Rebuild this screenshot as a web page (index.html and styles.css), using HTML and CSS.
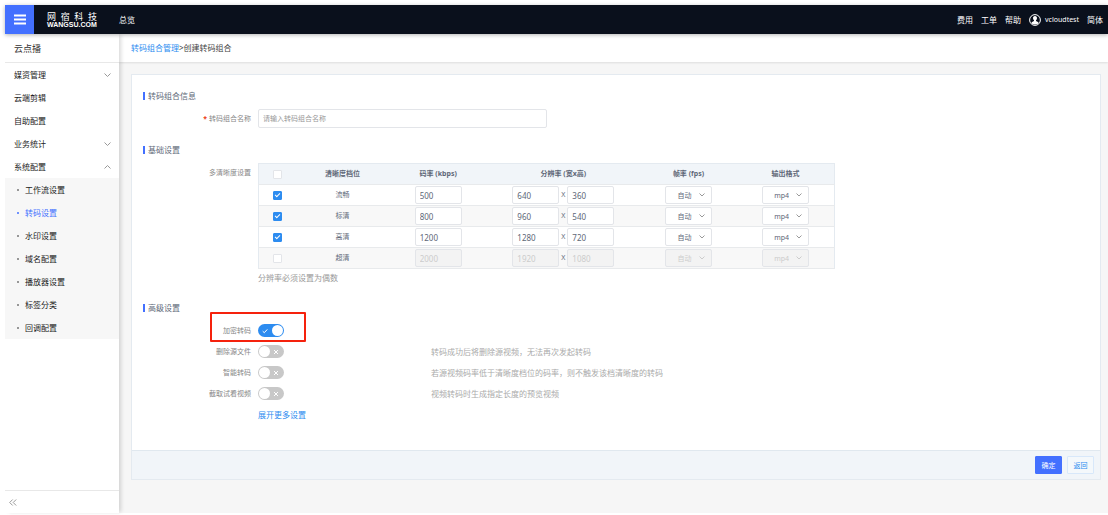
FILE: index.html
```html
<!DOCTYPE html>
<html lang="zh-CN">
<head>
    <meta charset="utf-8">
    <meta name="viewport" content="width=device-width, initial-scale=1.0">
    <title>创建转码组合</title>
    <link rel="stylesheet" href="styles.css">
</head>

<body>
    <header class="topbar">
        <button class="menu-btn" type="button" aria-label="菜单">
            <svg width="12" height="11" viewBox="0 0 12 11"><path d="M0 1.5h12M0 5.5h12M0 9.5h12" stroke="#fff" stroke-width="2"/></svg>
        </button>
        <a class="logo" href="#">
            <span class="logo-cn"><span>网</span><span>宿</span><span>科</span><span>技</span></span>
            <span class="logo-en">WANGSU.COM</span>
        </a>
        <a class="top-link" href="#">总览</a>
        <nav class="top-right">
            <a class="top-link" href="#">费用</a>
            <a class="top-link" href="#">工单</a>
            <a class="top-link" href="#">帮助</a>
            <a class="top-link user" href="#">
                <svg width="12" height="12" viewBox="0 0 12 12">
                    <circle cx="6" cy="6" r="5.4" fill="none" stroke="#fff"/>
                    <path d="M6 2C4.600 2 3.900 3 4 4.300c.1 1 .5 1.600 1 2v.8L2.600 8.200v1.200C4.500 10.900 7.500 10.900 9.400 9.400V8.200L7 7.100v-.8c.5-.4.9-1 1-2C8.100 3 7.400 2 6 2z" fill="#fff"/>
                </svg>
                <span>vcloudtest</span>
            </a>
            <a class="top-link" href="#">简体</a>
        </nav>
    </header>

    <div class="layout">
        <aside class="sidebar">
            <h2 class="sidebar-title">云点播</h2>
            <nav class="menu">
                <a class="menu-item" href="#">媒资管理<svg class="arrow" width="7" height="4" viewBox="0 0 7 4"><path d="M.5.500l3 3 3-3"/></svg></a>
                <a class="menu-item" href="#">云端剪辑</a>
                <a class="menu-item" href="#">自助配置</a>
                <a class="menu-item" href="#">业务统计<svg class="arrow" width="7" height="4" viewBox="0 0 7 4"><path d="M.5.500l3 3 3-3"/></svg></a>
                <a class="menu-item" href="#">系统配置<svg class="arrow" width="7" height="4" viewBox="0 0 7 4"><path d="M.5 3.500l3-3 3 3"/></svg></a>
                <div class="submenu">
                    <a class="submenu-item" href="#">工作流设置</a>
                    <a class="submenu-item active" href="#">转码设置</a>
                    <a class="submenu-item" href="#">水印设置</a>
                    <a class="submenu-item" href="#">域名配置</a>
                    <a class="submenu-item" href="#">播放器设置</a>
                    <a class="submenu-item" href="#">标签分类</a>
                    <a class="submenu-item" href="#">回调配置</a>
                </div>
            </nav>
            <button class="collapse-btn" type="button" aria-label="收起">
                <svg width="8" height="7" viewBox="0 0 8 7"><path d="M3.700.5l-3 3 3 3M7.200.5l-3 3 3 3" fill="none" stroke="#999"/></svg>
            </button>
        </aside>

        <main class="content">
            <div class="breadcrumb"><a href="#">转码组合管理</a>&gt;创建转码组合</div>

            <form class="card">
                <div class="card-body">
                    <h3 class="section-title">转码组合信息</h3>
                    <div class="form-row name-row">
                        <label class="form-label required" for="name">转码组合名称</label>
                        <input class="text-input name-input" id="name" type="text" placeholder="请输入转码组合名称">
                    </div>

                    <h3 class="section-title">基础设置</h3>
                    <div class="form-row table-row">
                        <span class="form-label">多清晰度设置</span>
                        <div class="table-wrap">
                            <table class="data-table">
                                <colgroup>
                                    <col class="col-check"><col class="col-level"><col class="col-rate"><col class="col-size"><col class="col-rate"><col class="col-rate">
                                </colgroup>
                                <thead>
                                    <tr>
                                        <th><input class="check" type="checkbox" aria-label="全选"></th>
                                        <th>清晰度档位</th>
                                        <th>码率 (kbps)</th>
                                        <th>分辨率 (宽x高)</th>
                                        <th>帧率 (fps)</th>
                                        <th>输出格式</th>
                                    </tr>
                                </thead>
                                <tbody>
                                    <tr>
                                        <td><input class="check" type="checkbox" aria-label="流畅" checked></td>
                                        <td>流畅</td>
                                        <td><input class="text-input num" type="text" aria-label="码率" value="500"></td>
                                        <td><div class="size"><input class="text-input num" type="text" aria-label="宽" value="640"><span>X</span><input class="text-input num" type="text" aria-label="高" value="360"></div></td>
                                        <td><div class="select"><select aria-label="帧率"><option>自动</option></select><svg width="6" height="4" viewBox="0 0 6 4"><path d="M.5.500l2.500 2.500 2.500-2.500"/></svg></div></td>
                                        <td><div class="select"><select aria-label="输出格式"><option>mp4</option></select><svg width="6" height="4" viewBox="0 0 6 4"><path d="M.5.500l2.500 2.500 2.500-2.500"/></svg></div></td>
                                    </tr>
                                    <tr>
                                        <td><input class="check" type="checkbox" aria-label="标清" checked></td>
                                        <td>标清</td>
                                        <td><input class="text-input num" type="text" aria-label="码率" value="800"></td>
                                        <td><div class="size"><input class="text-input num" type="text" aria-label="宽" value="960"><span>X</span><input class="text-input num" type="text" aria-label="高" value="540"></div></td>
                                        <td><div class="select"><select aria-label="帧率"><option>自动</option></select><svg width="6" height="4" viewBox="0 0 6 4"><path d="M.5.500l2.500 2.500 2.500-2.500"/></svg></div></td>
                                        <td><div class="select"><select aria-label="输出格式"><option>mp4</option></select><svg width="6" height="4" viewBox="0 0 6 4"><path d="M.5.500l2.500 2.500 2.500-2.500"/></svg></div></td>
                                    </tr>
                                    <tr>
                                        <td><input class="check" type="checkbox" aria-label="高清" checked></td>
                                        <td>高清</td>
                                        <td><input class="text-input num" type="text" aria-label="码率" value="1200"></td>
                                        <td><div class="size"><input class="text-input num" type="text" aria-label="宽" value="1280"><span>X</span><input class="text-input num" type="text" aria-label="高" value="720"></div></td>
                                        <td><div class="select"><select aria-label="帧率"><option>自动</option></select><svg width="6" height="4" viewBox="0 0 6 4"><path d="M.5.500l2.500 2.500 2.500-2.500"/></svg></div></td>
                                        <td><div class="select"><select aria-label="输出格式"><option>mp4</option></select><svg width="6" height="4" viewBox="0 0 6 4"><path d="M.5.500l2.500 2.500 2.500-2.500"/></svg></div></td>
                                    </tr>
                                    <tr>
                                        <td><input class="check" type="checkbox" aria-label="超清"></td>
                                        <td>超清</td>
                                        <td><input class="text-input num" type="text" aria-label="码率" value="2000" disabled></td>
                                        <td><div class="size"><input class="text-input num" type="text" aria-label="宽" value="1920" disabled><span>X</span><input class="text-input num" type="text" aria-label="高" value="1080" disabled></div></td>
                                        <td><div class="select"><select aria-label="帧率" disabled><option>自动</option></select><svg width="6" height="4" viewBox="0 0 6 4"><path d="M.5.500l2.500 2.500 2.500-2.500"/></svg></div></td>
                                        <td><div class="select"><select aria-label="输出格式" disabled><option>mp4</option></select><svg width="6" height="4" viewBox="0 0 6 4"><path d="M.5.500l2.500 2.500 2.500-2.500"/></svg></div></td>
                                    </tr>
                                </tbody>
                            </table>
                            <p class="tip">分辨率必须设置为偶数</p>
                        </div>
                    </div>

                    <h3 class="section-title">高级设置</h3>
                    <div class="switch-list">
                        <div class="form-row switch-row marked">
                            <label class="form-label" for="encrypt">加密转码</label>
                            <span class="switch on"><input id="encrypt" type="checkbox" checked><svg width="6" height="6" viewBox="0 0 6 6"><path d="M.7 3.200l1.600 1.500L5.300 1.400"/></svg></span>
                        </div>
                        <div class="form-row switch-row">
                            <label class="form-label" for="remove">删除源文件</label>
                            <span class="switch"><input id="remove" type="checkbox"><svg width="6" height="6" viewBox="0 0 6 6"><path d="M1 1l4 4M5 1l-4 4"/></svg></span>
                            <span class="hint">转码成功后将删除源视频，无法再次发起转码</span>
                        </div>
                        <div class="form-row switch-row">
                            <label class="form-label" for="smart">智能转码</label>
                            <span class="switch"><input id="smart" type="checkbox"><svg width="6" height="6" viewBox="0 0 6 6"><path d="M1 1l4 4M5 1l-4 4"/></svg></span>
                            <span class="hint">若源视频码率低于清晰度档位的码率，则不触发该档清晰度的转码</span>
                        </div>
                        <div class="form-row switch-row">
                            <label class="form-label" for="preview">截取试看视频</label>
                            <span class="switch"><input id="preview" type="checkbox"><svg width="6" height="6" viewBox="0 0 6 6"><path d="M1 1l4 4M5 1l-4 4"/></svg></span>
                            <span class="hint">视频转码时生成指定长度的预览视频</span>
                        </div>
                        <div class="form-row switch-row">
                            <span class="form-label"></span>
                            <a class="more" href="#">展开更多设置</a>
                        </div>
                    </div>
                </div>
                <div class="card-footer">
                    <button class="btn primary" type="button">确定</button>
                    <button class="btn" type="button">返回</button>
                </div>
            </form>
        </main>
    </div>
</body>

</html>
```

FILE: styles.css
```css
*, *::before, *::after {
    box-sizing: border-box;
}

body {
    margin: 0;
    padding: 5px 0 2px 5px;
    min-height: 100vh;
    display: flex;
    flex-direction: column;
    font-family: "Noto Sans", "Noto Sans CJK SC", sans-serif;
    font-size: 8px;
    line-height: 12px;
    color: #606878;
    background: #fff;
}

a {
    color: #2d8cf0;
    text-decoration: none;
}

button, input, select {
    font-family: inherit;
    font-size: inherit;
    color: inherit;
    margin: 0;
    padding: 0;
}

h2, h3, p {
    margin: 0;
    font-weight: 400;
}

svg {
    display: block;
}

/* top bar */
.topbar {
    display: flex;
    align-items: center;
    height: 29px;
    background: #0a101c;
    position: relative;
    z-index: 2;
    box-shadow: 0 1px 4px rgba(0, 0, 0, 0.3);
}

.menu-btn {
    display: flex;
    align-items: center;
    justify-content: center;
    width: 29px;
    height: 29px;
    border: none;
    background: #4370ff;
}

.logo {
    width: 50px;
    margin: 0 22px 0 13px;
    color: #fff;
}

.logo-cn {
    display: flex;
    justify-content: space-between;
    font-size: 9px;
    line-height: 9px;
}

.logo-en {
    display: block;
    font-family: "Liberation Sans", sans-serif;
    font-size: 7px;
    font-weight: 700;
    line-height: 7px;
}

.top-link {
    color: #fff;
}

.top-right {
    display: flex;
    align-items: center;
    gap: 8px;
    margin-left: auto;
    padding-right: 5px;
}

.user {
    display: flex;
    align-items: center;
    gap: 4px;
    font-size: 7px;
}

/* layout */
.layout {
    flex: 1;
    display: flex;
}

.sidebar {
    display: flex;
    flex-direction: column;
    width: 114px;
    flex-shrink: 0;
    background: #fff;
    position: relative;
    z-index: 1;
    box-shadow: 3px 0 4px -1px rgba(0, 0, 0, 0.15);
}

.sidebar-title {
    height: 29px;
    padding-left: 9px;
    line-height: 29px;
    font-size: 9px;
    color: #333;
    border-bottom: 1px solid #e8e8e8;
}

.menu-item, .submenu-item {
    display: flex;
    align-items: center;
    height: 23px;
    color: #222;
}

.menu-item {
    justify-content: space-between;
    padding: 0 8px 0 9px;
}

.arrow path, .select path {
    fill: none;
    stroke: #999;
}

.submenu {
    background: #f7f7f7;
}

.submenu-item {
    padding-left: 12px;
    gap: 6px;
}

.submenu-item::before {
    content: "";
    width: 2px;
    height: 2px;
    border-radius: 1px;
    background: #777;
}

.submenu-item.active {
    color: #4370ff;
}

.submenu-item.active::before {
    background: #4370ff;
}

.collapse-btn {
    height: 23px;
    margin-top: auto;
    padding-left: 4px;
    border: none;
    border-top: 1px solid #e8e8e8;
    background: #fff;
}

.content {
    flex: 1;
    min-width: 0;
    background: #f6f6f6;
}

.breadcrumb {
    height: 28px;
    padding-left: 12px;
    line-height: 28px;
    color: #444;
    background: #fff;
    box-shadow: 0 1px 2px rgba(0, 0, 0, 0.1);
}

/* form card */
.card {
    margin: 12px 7px 0 12px;
    border: 1px solid #e4eaf0;
    background: #fff;
}

.card-body {
    padding: 15px 11px 25px;
}

.section-title {
    display: flex;
    align-items: center;
    gap: 3px;
    height: 12px;
    font-size: 8px;
}

.section-title::before {
    content: "";
    width: 2px;
    height: 8px;
    background: #4370ff;
}

.form-row {
    display: flex;
}

.form-label {
    width: 108px;
    margin-right: 7px;
    flex-shrink: 0;
    text-align: right;
    font-size: 7px;
    color: #888;
}

.required::before {
    content: "*";
    margin-right: 2px;
    font-weight: 700;
    color: #ed4014;
}

.name-row {
    align-items: center;
    margin: 7px 0 16px;
}

.text-input {
    height: 18px;
    padding: 0 4px;
    border: 1px solid #e3e5e9;
    border-radius: 2px;
    background: #fff;
}

.name-input {
    width: 100%;
    max-width: 289px;
    height: 19px;
    font-size: 7px;
}

.name-input::placeholder {
    color: #999;
}

.table-row {
    margin: 7px 0 18px;
}

.table-row .form-label {
    padding-top: 4px;
}

.table-wrap {
    flex: 1;
}

.data-table {
    width: 100%;
    max-width: 577px;
    table-layout: fixed;
    border-collapse: collapse;
    border: 1px solid #e4eaf0;
    font-size: 7px;
}

.col-check {
    width: 37px;
}

.col-level {
    width: 94px;
}

.col-size {
    width: 153px;
}

.data-table th, .data-table td {
    height: 21px;
    padding: 0;
    text-align: center;
    vertical-align: middle;
    border-bottom: 1px solid #e8eaec;
}

.data-table th {
    background: #f1f5f9;
    font-weight: 700;
}

.data-table tbody tr:nth-child(even) {
    background: #f8f8f8;
}

.check {
    display: block;
    appearance: none;
    width: 9px;
    height: 9px;
    margin: 0 auto;
    border: 1px solid #e3e5e9;
    border-radius: 1px;
    background: #fff;
}

.check:checked {
    border-color: #2d8cf0;
    background: #2d8cf0;
}

.check:checked::after {
    content: "";
    display: block;
    width: 3px;
    height: 5px;
    margin: 0 auto;
    border: solid #fff;
    border-width: 0 1px 1px 0;
    transform: rotate(45deg);
}

.num {
    display: block;
    width: 47px;
    margin: 0 auto;
    font-size: 8px;
}

.size {
    display: flex;
    justify-content: center;
    gap: 2px;
}

.size .num {
    margin: 0;
}

.size span {
    width: 4px;
    line-height: 18px;
}

.select {
    position: relative;
    width: 47px;
    margin: 0 auto;
}

.select select {
    display: block;
    appearance: none;
    width: 100%;
    height: 18px;
    padding: 0 19px 0 11px;
    text-align: center;
    border: 1px solid #e3e5e9;
    border-radius: 2px;
    background: #fff;
}

.select svg {
    position: absolute;
    top: 7px;
    right: 7px;
    pointer-events: none;
}

.text-input:disabled, .select select:disabled {
    color: #ccc;
    background: #f3f3f3;
    opacity: 1;
}

.select select:disabled + svg path {
    stroke: #ccc;
}

.tip {
    padding-top: 3px;
    color: #999;
}

/* switches */
.switch-list {
    padding-top: 6px;
}

.switch-row {
    align-items: center;
    height: 21px;
}

.marked {
    position: relative;
}

/* highlight frame around the encryption switch */
.marked::after {
    content: "";
    position: absolute;
    top: -8px;
    left: 67px;
    width: 96px;
    height: 30px;
    border: 2px solid #f5220d;
    border-radius: 1px;
    pointer-events: none;
}

.switch {
    position: relative;
    width: 26px;
    height: 13px;
}

.switch input {
    display: block;
    appearance: none;
    width: 26px;
    height: 13px;
    padding: 1px;
    border-radius: 7px;
    background: #c8c8c8;
}

.switch input::before {
    content: "";
    display: block;
    width: 11px;
    height: 11px;
    border-radius: 6px;
    background: #fff;
}

.switch input:checked {
    background: #2d8cf0;
}

.switch input:checked::before {
    margin-left: auto;
}

.switch svg {
    position: absolute;
    top: 4px;
    right: 5px;
    pointer-events: none;
}

.switch.on svg {
    right: auto;
    left: 4px;
}

.switch path {
    fill: none;
    stroke: #fff;
}

.hint {
    margin-left: 147px;
    color: #aaa;
}

.card-footer {
    display: flex;
    align-items: center;
    justify-content: flex-end;
    gap: 5px;
    height: 29px;
    padding-right: 6px;
    border-top: 1px solid #e0e8ef;
    background: #f1f5f9;
}

.btn {
    width: 27px;
    height: 18px;
    border: 1px solid #d8e8fa;
    border-radius: 1px;
    font-size: 7px;
    color: #2d8cf0;
    background: #f4f8fb;
}

.btn.primary {
    border-color: #4370ff;
    color: #fff;
    background: #4370ff;
}
```
